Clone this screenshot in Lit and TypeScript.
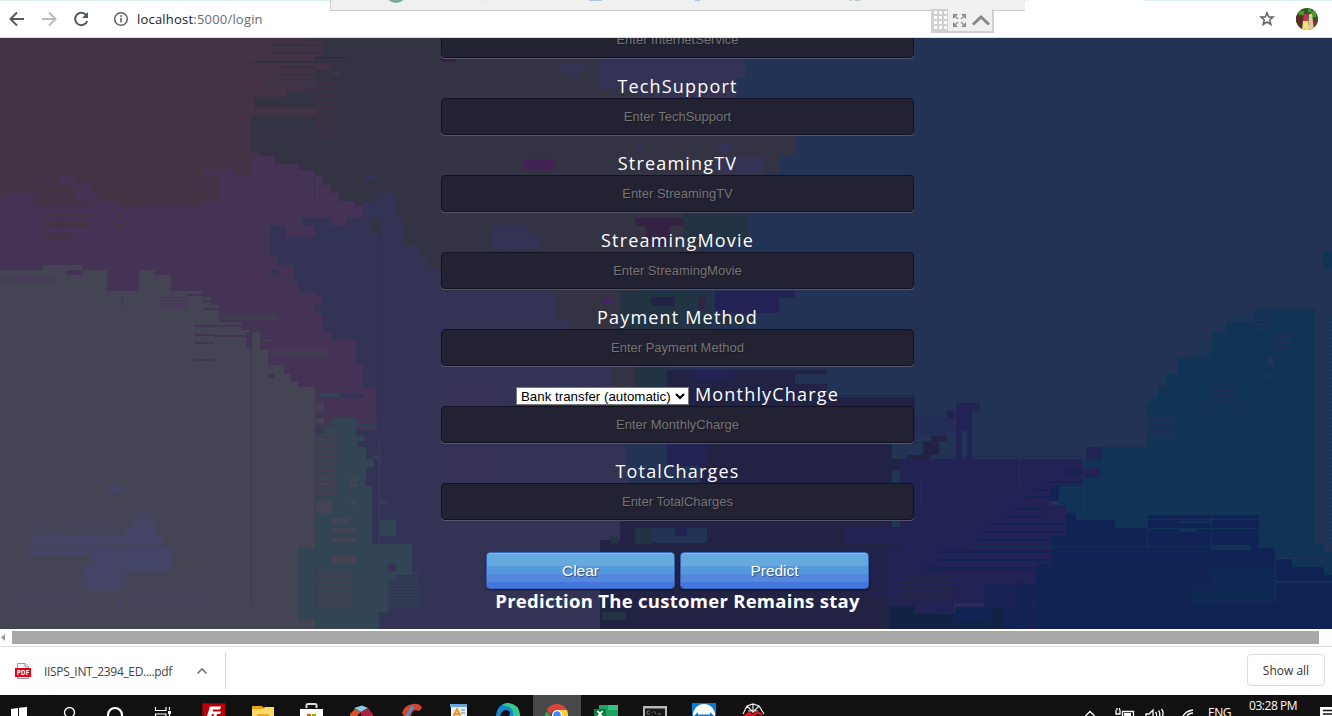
import { LitElement, html, svg, css } from "lit";
import { customElement } from "lit/decorators.js";

type Block = [string, number, number, number, number];

const shapes: [string, string][] = [
  // centre column
  ["#333344", "M251 38H745V60H736V110H795V156H780V173H763V213H745V240H700V290H640V330H612V366H555V400H251Z"],
  ["#333355", "M600 60H745V78H736V98H690V110H640V90H600Z"],
  ["#333355", "M270 226H302V218H331V226H347V218H363V202H379V193H395V218H403V236H404V245H420V257H428V270H441V291H555V320H570V366H612V388H625V444H627V483H620V540H600V629H315V400H251V270H294V265H278V257H270Z"],
  ["#222244", "M667 370H827V395H915V470H892V527H915V629H600V540H620V483H700V444H667Z"],
  // left side
  ["#443344", "M0 38H307V41H323V57H315V97H254V116H251V151H259V206H0Z"],
  ["#443355", "M0 201H27V206H91V201H75V185H91V193H99V201H115V206H203V201H219V176H203V170H235V176H251V156H275V164H299V170H315V176H323V185H331V193H339V201H355V206H363V218H347V226H331V218H302V226H315V237H286V226H270V257H278V265H294V282H299V291H315V297H323V305H315V313H323V332H331V340H356V364H363V387H376V430H0Z"],
  ["#444455", "M0 270H43V265H83V270H67V275H83V270H107V291H139V270H155V275H171V291H203V297H211V305H219V322H242V330H250V350H268V365H284V374H290V382H298V387H315V629H0Z"],
  ["#334455", "M315 433H324V427H332V418H356V436H364V441H358V447H366V459H374V467H366V486H372V544H412V575H396V580H388V612H379V629H315V620H298V548H315Z"],
  ["#444466", "M31 536H125V528H131V520H139V513H147V520H155V528H157V536H163V545H31ZM27 548H171V572H125V590H83V564H91V556H27ZM107 486H122V493H107Z"],
  // right side
  ["#113355", "M1270 309H1315V543H1332V575H1259V548H1148V528H1059V486H1084V459H1102V447H1147V403H1150V397H1158V387H1166V374H1178V357H1212V332H1226V322H1254V309Z"],
  ["#222255", "M900 459H1083V486H1051V505H1067V536H1052V564H1036V583H984V603H954V614H900ZM1086 447H1102V460H1086ZM1084 468H1100V478H1084Z"],
  ["#112255", "M1059 486H1051V501H1059ZM1067 513H1076V520H1115V528H1148V515H1259V548H1275V575H1292V567H1324V575H1332V629H955V607H984V583H1036V564H1052V536H1067Z"],
  ["#112244", "M890 603H915V614H955V621H991V607H1004V629H890Z"],
];

const blocks: Block[] = [
  // dark bands cut in the upper left
  ["#333344", 267, 44, 56, 2], ["#333344", 267, 52, 56, 2], ["#333344", 251, 61, 64, 2],
  ["#333344", 278, 66, 37, 2], ["#333344", 278, 74, 37, 2], ["#333344", 302, 88, 13, 2],
  ["#333344", 286, 91, 29, 6], ["#443344", 254, 108, 61, 7], ["#443344", 315, 63, 16, 7],
  ["#443344", 331, 72, 8, 3], ["#332244", 315, 57, 32, 1], ["#443355", 59, 176, 16, 8],
  ["#443355", 3, 193, 32, 10], ["#333355", 363, 176, 13, 5], ["#443344", 43, 214, 48, 4],
  ["#443344", 43, 222, 48, 6], ["#443344", 43, 233, 31, 6], ["#443344", 115, 214, 9, 4],
  ["#443344", 115, 223, 9, 6], ["#443344", 59, 206, 1, 44], ["#443344", 123, 206, 1, 44],
  ["#443344", 59, 249, 64, 1], ["#443344", 187, 206, 1, 45], ["#333355", 270, 270, 8, 5],
  ["#333344", 314, 176, 1, 30], ["#333344", 371, 218, 8, 16], ["#2f2f50", 379, 220, 1, 210],
  // purple marks on the grey field
  ["#443355", 187, 294, 16, 2], ["#443355", 203, 300, 8, 2], ["#443355", 203, 308, 16, 2],
  ["#443355", 194, 325, 48, 2], ["#443355", 194, 334, 20, 2], ["#443355", 214, 335, 32, 2],
  ["#443355", 194, 342, 20, 2], ["#443355", 194, 359, 20, 2], ["#444455", 252, 332, 8, 18],
  ["#444455", 260, 340, 16, 1], ["#443355", 246, 332, 5, 16], ["#443355", 122, 297, 1, 11],
  ["#443355", 251, 350, 1, 257], ["#443355", 315, 387, 1, 242], ["#443355", 268, 374, 6, 4],
  ["#444455", 316, 403, 8, 8], ["#444455", 316, 418, 8, 6],
  // teal details
  ["#334455", 320, 393, 20, 4], ["#333355", 340, 394, 24, 3], ["#334455", 379, 520, 17, 16],
  ["#334455", 379, 440, 1, 104], ["#333355", 388, 564, 8, 8], ["#334455", 374, 455, 4, 4],
  ["#334455", 380, 501, 8, 3], ["#444455", 316, 479, 16, 6], ["#444455", 316, 500, 16, 13],
  ["#444455", 332, 518, 16, 5], ["#444455", 332, 528, 24, 4], ["#444455", 332, 538, 24, 3],
  ["#444455", 332, 556, 24, 8], ["#444455", 350, 478, 8, 3], ["#444455", 350, 483, 8, 3], ["#444455", 350, 501, 6, 4],
  // blue island dividers
  ["#444455", 58, 536, 1, 22], ["#444455", 122, 536, 1, 54], ["#444455", 83, 576, 40, 1],
  ["#444455", 83, 580, 40, 1], ["#444455", 83, 584, 40, 1], ["#444466", 117, 604, 6, 3],
  // patches round the form
  ["#333355", 560, 63, 24, 8], ["#333355", 567, 70, 12, 8], ["#332244", 441, 50, 15, 12],
  ["#442255", 524, 159, 31, 11], ["#333355", 635, 143, 8, 8], ["#333355", 715, 143, 16, 8],
  ["#333355", 716, 157, 48, 17], ["#332244", 635, 218, 48, 8], ["#332244", 646, 226, 24, 20],
  ["#223344", 683, 213, 64, 30], ["#333355", 491, 226, 16, 23], ["#333355", 508, 226, 22, 23],
  ["#333355", 530, 235, 9, 14], ["#223344", 620, 291, 92, 38], ["#222244", 651, 297, 24, 9],
  ["#442266", 603, 297, 8, 6], ["#222255", 715, 291, 80, 7], ["#222255", 715, 298, 64, 15],
  ["#332244", 699, 297, 6, 12], ["#223344", 720, 313, 30, 12], ["#333344", 612, 366, 23, 22],
  ["#223344", 635, 366, 32, 22], ["#222255", 693, 370, 40, 10], ["#223355", 795, 374, 32, 10],
  ["#223355", 625, 444, 42, 22], ["#222255", 667, 444, 40, 22], ["#223355", 892, 444, 23, 15],
  ["#223355", 650, 528, 57, 15], ["#223344", 635, 528, 17, 16], ["#222255", 675, 528, 12, 8],
  ["#222255", 843, 528, 72, 16], ["#222255", 890, 548, 25, 58], ["#223344", 610, 537, 8, 7],
  ["#223344", 602, 612, 24, 8],
  // right side marks
  ["#222255", 956, 403, 16, 28], ["#222255", 956, 403, 24, 8], ["#222255", 947, 411, 8, 8],
  ["#222255", 956, 420, 6, 39], ["#222255", 967, 425, 5, 34], ["#222244", 931, 436, 16, 5],
  ["#222244", 923, 441, 16, 14], ["#222244", 907, 455, 24, 4], ["#223355", 1019, 459, 1, 27],
  ["#223355", 1083, 459, 1, 54], ["#223355", 921, 478, 1, 28], ["#112255", 1060, 471, 23, 2],
  ["#112255", 1044, 481, 39, 2], ["#112255", 1035, 489, 16, 2], ["#112255", 1027, 496, 24, 2],
  ["#112255", 1011, 508, 32, 2], ["#112255", 1003, 516, 41, 2], ["#112255", 991, 523, 76, 2],
  ["#112255", 983, 531, 84, 2], ["#112255", 978, 539, 74, 2], ["#112255", 939, 551, 113, 2],
  ["#112255", 939, 559, 113, 2], ["#112255", 923, 567, 113, 2], ["#112255", 939, 609, 8, 2],
  ["#222255", 1018, 583, 1, 46], ["#113355", 1148, 519, 111, 1], ["#113355", 1148, 528, 111, 1],
  ["#113355", 1147, 528, 1, 20], ["#113355", 1211, 515, 1, 33], ["#113355", 1180, 521, 31, 2],
  ["#113355", 1180, 529, 16, 3], ["#113355", 1211, 545, 40, 5], ["#113355", 1275, 558, 1, 43],
  ["#113355", 1276, 581, 56, 2], ["#112255", 1276, 559, 16, 16], ["#223355", 1315, 309, 8, 234],
  ["#223355", 1267, 357, 7, 8], ["#223355", 1267, 374, 7, 4], ["#113355", 1323, 251, 9, 18],
  ["#223355", 1324, 543, 8, 9], ["#223355", 1276, 558, 47, 1],
];

// [pattern, x, y, w, h]
const dither: Block[] = [
  ["rTeal", 316, 433, 22, 62], ["dTeal", 380, 571, 40, 36],
  ["dGrey", 316, 570, 35, 37], ["dTeal", 323, 423, 55, 7], ["dDark", 266, 77, 49, 8],
  ["dBrown", 315, 78, 18, 64], ["dBrown", 254, 108, 48, 8], ["dGrey", 257, 349, 70, 8],
  ["dGrey", 219, 314, 58, 7], ["dPurple", 0, 182, 250, 3], ["dDark", 251, 181, 64, 3],
  ["dBlue", 10, 505, 110, 30], ["dBlue", 10, 575, 75, 35], ["dBlue", 125, 572, 90, 35],
  ["rBlue", 85, 572, 40, 16], ["dPurple", 160, 297, 27, 11], ["dPurple", 2, 275, 56, 9],
  ["dViolet", 915, 418, 40, 18], ["dSlate", 1115, 410, 32, 37], ["dSlate", 1147, 418, 28, 20],
  ["dSlate", 1211, 388, 24, 13], ["dTealB", 1195, 342, 17, 15], ["dSlate", 1275, 332, 17, 18],
  ["rSlate", 1254, 313, 16, 18], ["dTealB", 1230, 314, 24, 8], ["rTealB", 1323, 313, 9, 230],
  ["dTealB", 1211, 570, 64, 32], ["dTealB", 1190, 590, 21, 16], ["dViolet", 1028, 570, 8, 59],
  ["dNavy", 900, 575, 55, 28], ["dViolet", 956, 583, 60, 24], ["dTealB", 974, 545, 250, 3],
  ["dTealB", 1276, 552, 40, 6], ["dViolet", 960, 455, 122, 3],
  ["dViolet", 870, 548, 20, 50], ["rSlate", 827, 375, 88, 22],
  ["rPurple", 443, 380, 60, 22], ["rPurple", 443, 448, 60, 30],
];

const pat = (id: string, c: string, rows = false) =>
  rows
    ? svg`<pattern id=${id} width="8" height="4" patternUnits="userSpaceOnUse"><path d="M0 0H8V1H0Z" fill=${c}/></pattern>`
    : svg`<pattern id=${id} width="2" height="3" patternUnits="userSpaceOnUse"><path d="M0 0H1V1.5H0Z" fill=${c} opacity=".75"/></pattern>`;

const backdrop = html`<svg class="backdrop" width="1332" height="591" viewBox="0 38 1332 591" shape-rendering="crispEdges" aria-hidden="true">
  <defs>
    ${pat("dTeal", "#334455")}${pat("dGrey", "#444455")}${pat("dPurple", "#443355")}${pat("dBrown", "#443344")}
    ${pat("dNavy", "#222244")}${pat("dBlue", "#44445c")}${pat("dViolet", "#222255")}${pat("dSlate", "#223355")}
    ${pat("dTealB", "#113355")}${pat("dDark", "#333344")}<pattern id="rTeal" width="8" height="6" patternUnits="userSpaceOnUse"><path d="M0 0H8V3H0Z" fill="#443f50"/></pattern>${pat("rBlue", "#444466", true)}
    ${pat("rSlate", "#223355", true)}${pat("rTealB", "#113355", true)}${pat("rPurple", "#3b3355", true)}
  </defs>
  <rect x="0" y="38" width="1332" height="591" fill="#223355"/>
  ${shapes.map(([c, d]) => svg`<path fill=${c} d=${d}/>`)}
  ${blocks.map(([c, x, y, w, h]) => svg`<rect fill=${c} x=${x} y=${y} width=${w} height=${h}/>`)}
  ${dither.map(([p, x, y, w, h]) => svg`<rect fill=${`url(#${p})`} x=${x} y=${y} width=${w} height=${h}/>`)}
</svg>`;

const taskIcons = svg`
  <path fill="#fff" d="M11 14L18 13V21H11ZM19 12.8L27 12V21H19Z"/>
  <circle cx="69.500" cy="17.500" r="5" fill="none" stroke="#fff" stroke-width="1.300"/>
  <circle cx="115" cy="20" r="7" fill="none" stroke="#fff" stroke-width="2.200"/>
  <path d="M155.500 12V15.500H166V12M155.500 21V19H166V21M169.500 12V15M169.500 19V21" fill="none" stroke="#fff" stroke-width="1.200"/><path fill="#fff" d="M168 16H171V19H168Z"/>
  <rect x="202.500" y="8.500" width="23" height="14" fill="#b80006" stroke="#7d1014" stroke-dasharray="1 1"/>
  <path d="M207 21L210 11.500H221L220 14.500H213L212.500 16.500H221L220 19H217L216.500 21H213.500L214 19H212L211.500 21Z" fill="#fff"/>
  <path fill="#e8a317" d="M252 11H262L264 13V21H252Z"/><path fill="#ffd968" d="M252 14H263L265 12H274V21H252Z"/><path fill="#e2ab2f" d="M257 19H269V21H257Z"/>
  <path d="M306.500 13V10Q306.500 9 308 9H315Q316.500 9 316.500 10V13" fill="none" stroke="#ddd" stroke-width="2"/><path fill="#fff" d="M300 14H323V21H300Z"/><path fill="#f25022" d="M307 19H311V21H307Z"/><path fill="#7fba00" d="M312 19H316V21H312Z"/>
  <path fill="#d9532c" d="M350 19L355 14L361 17L357 21H350Z"/><path fill="#8ecbe0" d="M354 13L362 10.500L368 13L361 17Z"/><path fill="#a8213e" d="M361 17L368 13L373 19V21H361Z"/>
  <path d="M402 18Q404 10 413 9Q420 8 422 13L419 16Q412 13 411 21H404Z" fill="#d5442c"/><path d="M407 21L413 11" stroke="#3a9bd5" stroke-width="2.500"/>
  <path fill="#e9eff7" d="M451 9H467V21H451Z"/><path fill="#6ba4d8" d="M450 9H467V12H450Z"/><path d="M453.500 21L457 14L460.500 21M455 19H459" stroke="#ef9021" stroke-width="1.800" fill="none"/><path d="M461 15H465M461 18H465" stroke="#5d83bc"/>
  <path fill="#1686d0" d="M496 21Q497 9 508 8Q519 9 520 20V21H509Q512 16 506 15Q502 15 500 21Z"/><path fill="#35c98a" d="M508 8Q519 9 520 20V21H513Q515 12 502 10Q505 8 508 8Z"/>
  <path fill="#484848" d="M533 0H581V21H533Z"/>
  <path fill="#dd4438" d="M547 14Q551 9 557 9Q564 9 567 15H557Q551 15 551 20L547 15Z"/><path fill="#2da94f" d="M546 16L551 21H545Z"/><path fill="#ffcd42" d="M557 15H567Q568 17 568 21H561Z"/><circle cx="557" cy="20" r="5" fill="#fff"/><circle cx="557" cy="20" r="3.800" fill="#4285f4"/>
  <path fill="#21a366" d="M599 10H618V21H599Z"/><path fill="#33c481" d="M608 10H618V15H608Z"/><path fill="#107c41" d="M594 14H606V21H594Z"/><path d="M597.500 16L602 21M602.500 16L598 21" stroke="#fff" stroke-width="1.800"/>
  <path fill="#b8b8b8" d="M643 11H667V21H643Z"/><path fill="#171717" d="M645 13.500H665V21H645Z"/><path d="M650 16H647V19H650M652 17V18M654 16L656 19M658 19H661" stroke="#888" fill="none" stroke-width=".8"/>
  <path fill="#087bd8" d="M692 8H716V21H692Z"/><circle cx="704" cy="20" r="11" fill="#fff"/><path fill="#087bd8" d="M694 21L698 17V19.500H710V17L714 21Z"/>
  <path d="M743 19L747 11L753 9L759 11L764 19M747 11L753 17L759 11M753 9V18M748 16H758" fill="none" stroke="#eee" stroke-width="1.200"/><path d="M745 21L749 18L753 21L757 17L762 20" stroke="#e80f16" stroke-width="2.500" fill="none"/>`;

@customElement("app-root")
export class AppRoot extends LitElement {
  static styles = css`
    :host { display: block; width: 1332px; height: 716px; overflow: hidden; position: relative; background: #fff; }
    * { box-sizing: border-box; }
    svg { display: block; flex: none; }
    .toolbar { height: 38px; display: flex; align-items: center; padding: 0 14px 0 8px; background: #fff; border-top: 1px solid #d7f0ed; border-bottom: 1px solid #dcdce8; }
    .nav { display: flex; gap: 14px; align-items: center; }
    .info { margin: 0 8px 0 23px; }
    .url { flex: 1; font: 13px/18px "Open Sans", sans-serif; letter-spacing: .2px; color: #6b6b70; }
    .url b { font-weight: 400; color: #222; }
    .star { margin-right: 21px; }
    .share { position: absolute; left: 330px; top: 0; width: 695px; height: 11px; background: #f0f0f0; border: solid #ccc; border-width: 0 0 1px 1px; }
    .gap { position: absolute; left: 1028px; top: 0; width: 116px; height: 1px; background: #fff; }
    .grip { position: absolute; left: 931px; top: 9px; }
    .page { height: 591px; display: grid; overflow: hidden; }
    .page > * { grid-area: 1 / 1; }
    .form { position: relative; width: 473px; margin: -17px 0 0 441px; display: flex; flex-direction: column; font-family: "Open Sans", sans-serif; color: #fff; }
    .row { padding-top: 16px; }
    .label { height: 24px; display: flex; justify-content: center; align-items: center; gap: 6px; font-size: 18px; line-height: 24px; letter-spacing: 1.180px; white-space: nowrap; }
    .field { display: block; width: 473px; height: 37px; padding: 0 10px; border: 1px solid #111122; border-radius: 4px; background: #222233; box-shadow: 0 1px 0 #555570; text-align: center; font: 13px "Liberation Sans", sans-serif; color: #fff; text-shadow: 1px 1px 1px rgba(0,0,0,.3); outline: none; }
    .field::placeholder { color: #757575; opacity: 1; }
    .pick { width: 173px; height: 18px; margin-top: 4px; padding: 0; font: 13.333px "Liberation Sans", sans-serif; color: #000; background: #fff; border: 1px solid #777; border-radius: 0; }
    .buttons { display: flex; justify-content: center; gap: 5px; padding-top: 32px; }
    .btn { width: 189px; height: 37px; padding: 0; border: 1px solid #3762bc; border-radius: 4px; color: #fff; font: 15.500px "Liberation Sans", sans-serif; text-shadow: 1px 1px 1px rgba(0,0,0,.45); background: linear-gradient(#66aadd 38%, #5599dd 38% 60%, #5588dd 60% 84%, #4477dd 84%); box-shadow: inset 0 1px 0 #84c4ec, 0 1px 2px rgba(0,0,0,.5); }
    .result { text-align: center; font-size: 18.500px; font-weight: 700; line-height: 24px; letter-spacing: .28px; white-space: nowrap; }
    .scroll { height: 17px; display: flex; align-items: flex-start; padding: 2px 13px 0 0; background: #fff; }
    .thumb { flex: 1; height: 13px; background: #a8a8a8; }
    .shelf { height: 49px; display: flex; align-items: center; justify-content: space-between; border-top: 1px solid #dcdce8; padding: 0 7px 0 15px; background: #fff; font: 12px/18px "Open Sans", sans-serif; color: #444; }
    .file { display: flex; align-items: center; height: 36px; width: 211px; border-right: 1px solid #c8d8d8; }
    .name { width: 130px; margin: 2px 22px 0 13px; white-space: nowrap; letter-spacing: -.33px; }
    .all { width: 78px; height: 32px; margin-bottom: 2px; border: 1px solid #dcdce8; border-radius: 4px; background: #fff; font: 12px "Open Sans", sans-serif; color: #333; padding: 0; }
    .tasks { height: 21px; display: flex; background: #111; overflow: hidden; color: #fff; font: 12px/16px "Open Sans", sans-serif; letter-spacing: -.45px; }
    .tray { margin-left: 295px; }
    .lang { margin: 10px 0 0 14px; width: 41px; }
    .clock { margin-top: 3px; width: 71px; white-space: nowrap; }
  `;

  private row(name: string, label: unknown = name) {
    return html`<div class="row"><div class="label">${label}</div><input class="field" placeholder=${"Enter " + name} aria-label=${name}></div>`;
  }

  render() {
    return html`
      <header class="toolbar">
        <div class="nav">
          <svg width="18" height="18" fill="none" stroke="#555a5e" stroke-width="2"><path d="M16 9H3M9 2.500L2.500 9L9 15.500"/></svg>
          <svg width="18" height="18" fill="none" stroke="#bbb" stroke-width="2"><path d="M2 9H15M9 2.500L15.500 9L9 15.500"/></svg>
          <svg width="18" height="18"><path d="M14.500 5.500A6.200 6.200 0 1 0 15.200 11" fill="none" stroke="#4f5b60" stroke-width="2"/><path d="M16 2V8H10Z" fill="#4f5b60"/></svg>
        </div>
        <svg class="info" width="16" height="16"><circle cx="8" cy="8" r="6.300" fill="none" stroke="#5f6368" stroke-width="1.500"/><path d="M7.200 7H8.800V11.500H7.200ZM7.200 4.300H8.800V5.900H7.200Z" fill="#5f6368"/></svg>
        <div class="url"><b>localhost</b>:5000/login</div>
        <svg class="star" width="16" height="16"><path d="M8 1.800L9.700 6H14L10.700 8.900L11.900 13.500L8 11L4.100 13.500L5.300 8.900L2 6H6.300Z" fill="none" stroke="#5f6368" stroke-width="1.500"/></svg>
        <svg width="22" height="22"><defs><clipPath id="face"><circle cx="11" cy="11" r="11"/></clipPath></defs><g clip-path="url(#face)"><path fill="#2e5a20" d="M0 0H22V22H0Z"/><path fill="#5a2f20" d="M0 8L5 5L8 13L6 22H0Z"/><path fill="#4b9a31" d="M3 3H8V7H3ZM15 3H20V9H15ZM12 1H15V4H12Z"/><path fill="#c6314f" d="M8 6H12V14H7Z"/><path fill="#ebc0a0" d="M13 6H16L18 22H12Z"/><path fill="#eee07e" d="M7 13H12L13 22H6Z"/><path fill="#6a3b2a" d="M18 11H22V22H18Z"/></g></svg>
      </header>
      <div class="gap"></div>
      <div class="share"><svg width="694" height="10"><circle cx="65" cy="-8" r="11" fill="#7aab9b"/><path fill="#f3dfbd" d="M150 0H153V1H150Z"/><path fill="#aac3e2" d="M258 0H271V1H258ZM364 0H369V1H364Z"/><path fill="#b5d3c4" d="M518 0H521V1H518ZM524 0H529V1H524Z"/></svg></div>
      <svg class="grip" width="63" height="24"><path fill="#d0d0d0" d="M0 0H63V24H0Z"/><path fill="#f0f0f0" d="M17 0H61V22H17Z"/>
        ${[2, 7, 12, 17].map(y => [3, 8, 13].map(x => svg`<rect x=${x} y=${y} width="3" height="3" fill="#fff"/>`))}
        <path d="M22 5H27L22 10ZM35 5V10L30 5ZM22 18V13L27 18ZM35 18H30L35 13Z" fill="#858585"/><path d="M23 6L27 10M34 6L30 10M23 17L27 13M34 17L30 13" stroke="#999" stroke-width="1.500"/>
        <path d="M42 15.500L50 8L58 15.500" fill="none" stroke="#888" stroke-width="3"/></svg>
      <main class="page">
        ${backdrop}
        <form class="form">
          <input class="field" placeholder="Enter InternetService" aria-label="InternetService">
          ${this.row("TechSupport")} ${this.row("StreamingTV")} ${this.row("StreamingMovie")} ${this.row("Payment Method")}
          ${this.row("MonthlyCharge", html`<select class="pick"><option>Bank transfer (automatic)</option></select><span>MonthlyCharge</span>`)}
          ${this.row("TotalCharges")}
          <div class="buttons"><button type="button" class="btn">Clear</button><button type="button" class="btn">Predict</button></div>
          <div class="result">Prediction The customer Remains stay</div>
        </form>
      </main>
      <div class="scroll"><svg width="12" height="13"><path d="M5 3V10L1 6.500Z" fill="#999"/></svg><div class="thumb"></div></div>
      <div class="shelf">
        <div class="file">
          <svg width="16" height="16"><path d="M2.500 15.500V.5H10L13.500 4V15.500Z" fill="#fff" stroke="#999"/><path d="M10 .5V4H13.500" fill="none" stroke="#999"/><path fill="#e4001b" d="M0 5H16V14H0Z"/><text x="8" y="12" text-anchor="middle" font-family="Open Sans" font-size="6.500" font-weight="700" fill="#fff">PDF</text></svg>
          <div class="name">IISPS_INT_2394_ED....pdf</div>
          <svg width="12" height="10"><path d="M1.500 7.500L6 3L10.500 7.500" fill="none" stroke="#777" stroke-width="1.700"/></svg>
        </div>
        <button class="all">Show all</button>
      </div>
      <footer class="tasks">
        <svg width="790" height="21">${taskIcons}</svg>
        <svg class="tray" width="109" height="21" fill="none" stroke="#fff" stroke-width="1.300"><path d="M.5 21L5 16.500L9.500 21"/><path d="M37.500 21V16.500H48.500V21M31 15V19H35V15M32 13V15M34.500 13V15"/><path d="M39 18H46V21H39Z" fill="#fff" stroke="none"/><path d="M61 21V19H64L68 15V21M70.500 17Q72 19 71.500 21M73.500 15.500Q75.500 18 74.500 21M76.500 14Q79 17 77.500 21"/><path d="M98 21Q101 16 108 15M102 21Q104 18 108 18"/></svg>
        <div class="lang">ENG</div>
        <div class="clock">03:28 PM</div>
        <svg width="12" height="21"><path fill="#fff" d="M0 12H12V21H0Z"/><path d="M3 15.500H12M3 19H12" stroke="#111" stroke-width="1.300"/></svg>
      </footer>`;
  }
}
